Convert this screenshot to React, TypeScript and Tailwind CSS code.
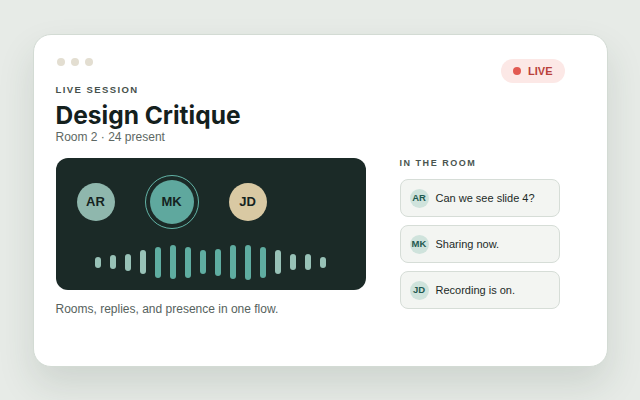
import React from "react";

const bars: { h: number; strong: boolean }[] = [
  { h: 11, strong: false },
  { h: 14, strong: false },
  { h: 17, strong: false },
  { h: 24, strong: false },
  { h: 31, strong: true },
  { h: 34, strong: true },
  { h: 31, strong: true },
  { h: 24, strong: true },
  { h: 27, strong: true },
  { h: 34, strong: true },
  { h: 35, strong: true },
  { h: 31, strong: true },
  { h: 24, strong: false },
  { h: 16, strong: false },
  { h: 16, strong: false },
  { h: 11, strong: false },
];

const msgs = [
  { who: "AR", text: "Can we see slide 4?" },
  { who: "MK", text: "Sharing now." },
  { who: "JD", text: "Recording is on." },
];

export default function App() {
  return (
    <div
      className="w-[640px] h-[400px] overflow-hidden bg-[#e7ebe7] bg-[linear-gradient(to_right,transparent_160px,#e9dfdd_160px,#e9dfdd_161px,transparent_161px)] bg-[length:160px_100%] flex items-start justify-center pt-[34px]"
      style={{ fontFamily: "'Liberation Sans', Arial, sans-serif" }}
    >
      <div className="w-[575px] h-[333px] bg-white rounded-[18px] border border-[#d3dbd4] shadow-[0_18px_36px_rgba(40,60,50,0.13)] pl-[22px] pr-[42px] pt-[22px]">
        <div className="flex justify-between items-start">
          <div className="flex flex-col">
            <div className="flex gap-[6px] pt-[1px] pl-[1px]">
              <span className="w-[8px] h-[8px] rounded-full bg-[#e3ded1]" />
              <span className="w-[8px] h-[8px] rounded-full bg-[#e3ded1]" />
              <span className="w-[8px] h-[8px] rounded-full bg-[#e3ded1]" />
            </div>
            <div className="mt-[18px] text-[9.5px] leading-[12px] font-bold tracking-[0.15em] text-[#46514c]">
              LIVE SESSION
            </div>
            <div
              className="mt-[5px] text-[24.5px] leading-[28px] font-bold text-[#14201d]"
              style={{ fontFamily: "Inter, 'Liberation Sans', sans-serif" }}
            >
              Design Critique
            </div>
            <div className="mt-[1px] text-[12px] leading-[14px] text-[#5d6863]">Room 2 · 24 present</div>
          </div>
          <div className="mt-[2px] h-[24px] px-[12px] rounded-full bg-[#fce8e6] flex items-center gap-[7px]">
            <span className="w-[8px] h-[8px] rounded-full bg-[#e25a52]" />
            <span className="text-[11px] font-bold text-[#b9413b]">LIVE</span>
          </div>
        </div>

        <div className="flex mt-[14px]">
          <div className="w-[310px] flex flex-col">
            <div className="h-[132px] rounded-[12px] bg-[#1b2a27] pt-[17px] pl-[21px] flex flex-col">
              <div className="flex items-center gap-[30px] h-[54px]">
                <div className="w-[38px] h-[38px] rounded-full bg-[#8fb7ad] flex items-center justify-center text-[13px] font-bold text-[#15231f]">
                  AR
                </div>
                <div className="w-[54px] h-[54px] rounded-full border-[1.5px] border-[#62b3a6] flex items-center justify-center">
                  <div className="w-[44px] h-[44px] rounded-full bg-[#5fa89e] flex items-center justify-center text-[13px] font-bold text-[#15231f]">
                    MK
                  </div>
                </div>
                <div className="w-[38px] h-[38px] rounded-full bg-[#d9c9a3] flex items-center justify-center text-[13px] font-bold text-[#15231f]">
                  JD
                </div>
              </div>
              <div className="mt-[15px] -ml-[21px] h-[36px] flex items-center justify-center gap-[9px]">
                {bars.map((b, i) => (
                  <span
                    key={i}
                    className={
                      b.strong
                        ? "w-[6px] rounded-full bg-[#5fada1]"
                        : "w-[6px] rounded-full bg-[#98c2b7]"
                    }
                    style={{ height: b.h }}
                  />
                ))}
              </div>
            </div>
            <div className="mt-[10px] text-[12px] leading-[18px] text-[#56625d]">
              Rooms, replies, and presence in one flow.
            </div>
          </div>

          <div className="ml-[34px] w-[160px] flex flex-col">
            <div className="-mt-[1px] text-[9px] leading-[12px] font-bold tracking-[0.17em] text-[#4a5550]">
              IN THE ROOM
            </div>
            <div className="mt-[10px] flex flex-col gap-[8px]">
              {msgs.map((m) => (
                <div
                  key={m.who}
                  className="h-[38px] rounded-[8px] border border-[#d6ddd7] bg-[#f3f5f2] flex items-center pl-[9px] gap-[7px]"
                >
                  <span className="w-[19px] h-[19px] rounded-full bg-[#cfe3dc] flex items-center justify-center text-[9.5px] font-bold text-[#1f5a50]">
                    {m.who}
                  </span>
                  <span className="text-[11px] text-[#1c2a27]">{m.text}</span>
                </div>
              ))}
            </div>
          </div>
        </div>
      </div>
    </div>
  );
}
